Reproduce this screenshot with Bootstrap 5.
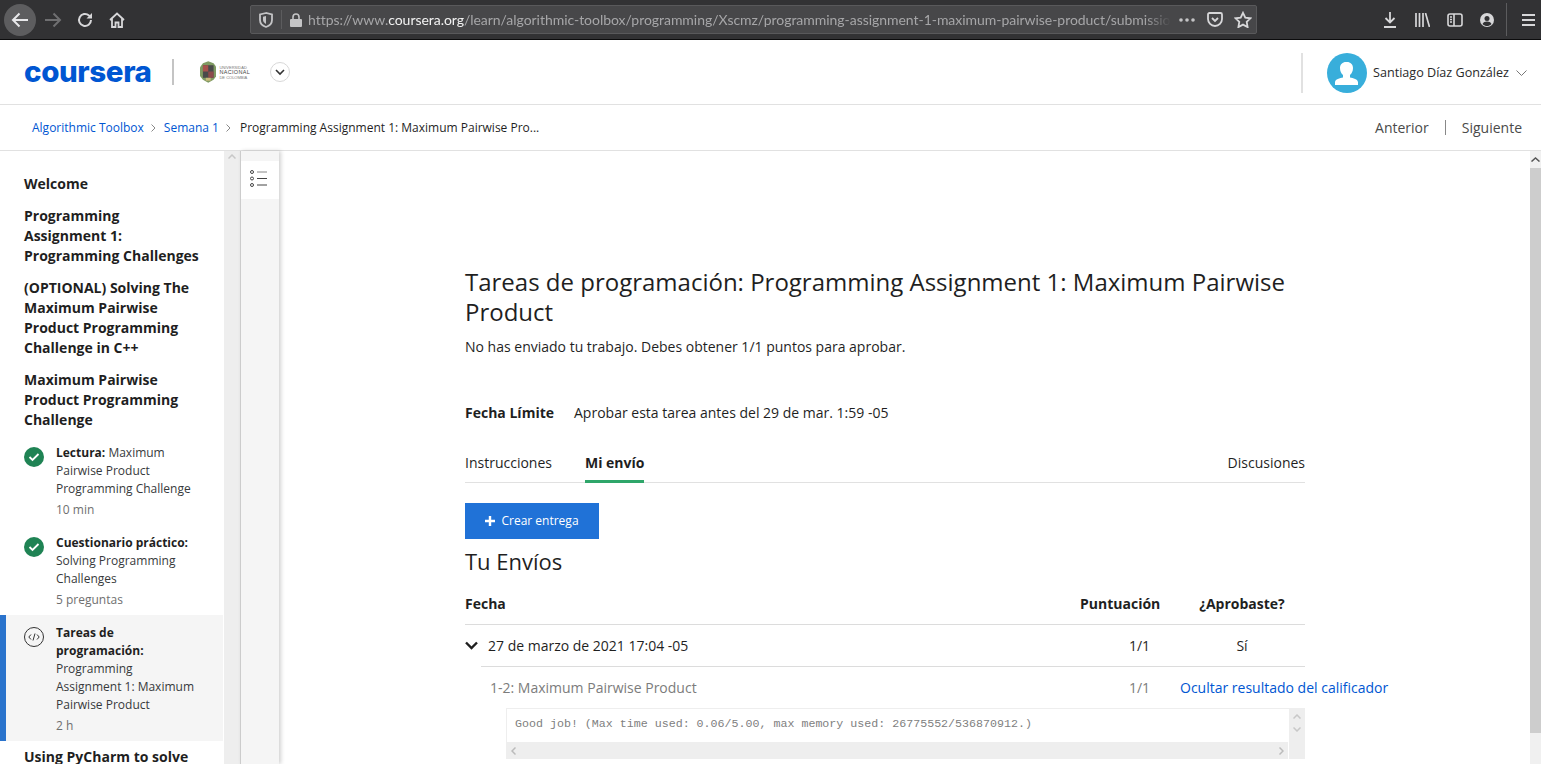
<!DOCTYPE html>
<html lang="es">
<head>
<meta charset="UTF-8">
<title>Programming Assignment 1: Maximum Pairwise Product</title>
<link href="https://cdn.jsdelivr.net/npm/bootstrap@5.3.0/dist/css/bootstrap.min.css" rel="stylesheet">
<style>
html, body { height: 100%; overflow: hidden; }
body { font-family: "Open Sans", sans-serif; font-size: 14px; color: #1f1f1f; background: #fff; }
a { text-decoration: none; }

.ff-bar { height: 40px; background: #323234; border-bottom: 1px solid #0c0c0d; color: #d7d7d9; padding-left: 4px; }
.ff-bar svg { display: block; flex: none; }
.ff-back { width: 32px; height: 32px; border-radius: 50%; background: #5d5d5f; }
.ff-slot { width: 32px; height: 32px; }
.ff-fwd { margin-left: 1px; }
.ff-url { width: 1007px; height: 29px; margin-left: 117px; background: #474749; border: 1px solid #59595b; border-radius: 2px; }
.ff-sep { width: 1px; background: #5c5c5e; align-self: stretch; }
.ff-sep-main { margin: 3px 0 3px 12px; }
.ff-lock { margin-left: 8px; }
.ff-address { width: 863px; flex: none; white-space: nowrap; overflow: hidden; font-family: Lato, sans-serif; font-size: 14px; letter-spacing: -.04px; color: #a6a6a8; margin-left: 6px;
  -webkit-mask-image: linear-gradient(to right, #000 97%, transparent); mask-image: linear-gradient(to right, #000 97%, transparent); }
.ff-address b { font-weight: 400; color: #f2f2f2; }
.ff-pocket { margin-left: 12px; }
.ff-star { margin-left: 11px; }
.ff-down { margin-left: 126px; }
.ff-lib { margin-left: 18px; }
.ff-side { margin-left: 17px; }
.ff-acct { margin-left: 17px; }
.ff-menu { margin-left: 15px; }

.top-head { height: 65px; border-bottom: 1px solid #e1e1e1; }
.brand-word { font-family: Inter, sans-serif; font-weight: 800; font-size: 29.5px; color: #0056d2; margin-left: 24px; letter-spacing: -.4px; line-height: 1; width: 127px; }
.head-rule { width: 2px; height: 26px; background: #c4c4c4; margin-left: 21px; }
.uni-logo { margin-left: 26px; width: 50px; }
.uni-words { font-family: "Liberation Sans", sans-serif; font-size: 4px; line-height: 5px; color: #777; margin-left: 3px; white-space: nowrap; }
.uni-words strong { font-size: 5.5px; font-weight: 400; letter-spacing: .3px; color: #444; }
.circle-btn { width: 20px; height: 20px; border: 1px solid #d8d8d8; border-radius: 50%; margin-left: 20px; }
.user-box { padding: 2px 14px 0 0; }
.user-rule { width: 2px; height: 40px; background: #e1e1e1; margin-right: 24px; }
.user-pic { width: 40px; height: 40px; border-radius: 50%; background: #38aedb; overflow: hidden; }
.user-name { font-size: 12.6px; margin: 0 7px 0 6px; color: #2a2a2a; }

.crumb-bar { height: 46px; border-bottom: 1px solid #e1e1e1; padding: 1px 19px 0 32px; font-size: 12px; }
.crumb-bar a { color: #0056d2; }
.crumb-sep { margin: 0 7.5px; }
.crumb-now { margin-left: 1px; }
.pager { font-size: 14px; color: #4a4a4a; margin-top: -1px; }
.pager i { display: block; width: 1px; height: 15px; background: #888; margin: 0 16px; }

.work-area { height: 613px; }
.side-nav { width: 224px; padding-top: 23px; overflow: hidden; flex: none; }
.side-title { font-size: 14px; font-weight: 700; line-height: 20px; width: 178px; margin: 0 0 12px 24px; color: #1f1f1f; }
.side-item { padding: 9px 0 5px 6px; border-left: 0 solid #2a73cc; }
.side-item.first { margin-top: -7px; }
.side-item.current { background: #f5f5f5; border-left-width: 6px; padding-left: 0; width: 223px; margin-bottom: 6px; }
.side-ico { width: 20px; margin-left: 18px; margin-top: 1px; flex: none; }
.side-text { width: 142px; margin-left: 12px; font-size: 12px; line-height: 18px; color: #373a3c; }
.side-text b { color: #1f1f1f; font-weight: 700; }
.side-text small { display: block; font-size: 12px; line-height: 20px; padding-top: 2px; color: #6f6f6f; }
.side-track { width: 16px; background: #eee; flex: none; padding: 3px 0 0 4px; }
.side-rail { width: 39px; background: #f5f5f5; border-left: 1px solid #ccc; padding-top: 10px; box-shadow: 2px 0 4px rgba(0,0,0,.18); flex: none; }
.rail-btn { height: 38px; background: #fff; }
.rail-btn svg { margin: 0 3px 3px 0; }

.page-body { padding: 116px 0 0 186px; min-width: 0; overflow: hidden; }
.page-inner { width: 840px; }
.page-h1 { font-size: 24px; font-weight: 400; line-height: 30px; margin: 0 0 10px; color: #1f1f1f; }
.page-note { margin: 0 0 46px; line-height: 20px; }
.due-row { line-height: 20px; margin-bottom: 30px; }
.due-row strong { font-weight: 700; margin-right: 20px; }
.tab-row { border-bottom: 1px solid #e1e1e1; height: 30px; }
.tab-row span { display: block; height: 30px; line-height: 20px; margin-right: 33px; }
.tab-row .on { font-weight: 700; border-bottom: 3px solid #2fa66a; }
.tab-row .tab-end { margin: 0 0 0 auto; }
.make-btn { display: block; width: 134px; height: 36px; margin-top: 20px; padding: 0; border: 0; border-radius: 0; background: #2072d7; color: #fff; font-size: 12px; }
.make-btn svg { margin: -2px 6px 0 0; vertical-align: middle; }
.sub-h2 { font-size: 22px; font-weight: 400; line-height: 30px; margin: 7px 0 14px; }
.col-score { width: 119px; flex: none; text-align: center; }
.col-pass { width: 106px; flex: none; text-align: center; padding-right: 20px; }
.sub-head { height: 35px; border-bottom: 1px solid #dcdcdc; font-weight: 700; padding-bottom: 10px; }
.sub-head .col-score { text-align: left; }
.sub-row { height: 42px; }
.sub-row.date-row { border-bottom: 1px solid #dcdcdc; margin-left: 16px; }
.sub-row svg { margin: 0 10px 0 -16px; }
.sub-part { height: 41px; color: #7c7c7c; margin-left: 16px; padding: 0 0 1px 9px; }
.sub-part a { color: #0056d2; white-space: nowrap; margin-left: -19px; display: block; text-align: left; width: 210px; }
.grader-box { margin-left: 41px; height: 51px; border: 1px solid #eee; border-width: 1px 0 0 1px; }
.grader-main { min-width: 0; }
.grader-out { height: 33px; padding: 0 8px; font-family: "Liberation Mono", monospace; font-size: 11.65px; color: #808080; white-space: nowrap; line-height: 30px; overflow: hidden; }
.grader-x { height: 17px; background: #eee; padding: 0 4px; }
.grader-y { width: 17px; flex: none; background: #eee; padding-top: 5px; border-left: 1px solid #fff; }
.page-track { width: 11px; background: #f0f0f0; flex: none; }
.page-up { height: 17px; padding: 6px 0 0 1px; }
.page-thumb { height: 565px; background: #cdcdcd; }
</style>
</head>
<body>

<div class="ff-bar d-flex align-items-center">
  <div class="ff-back d-flex align-items-center justify-content-center">
    <svg width="18" height="16" viewBox="0 0 18 16" fill="none" stroke="#e8e8ea" stroke-width="2"><path d="M17 8H2M8.500 1.500 2 8l6.500 6.500"/></svg>
  </div>
  <div class="ff-slot ff-fwd d-flex align-items-center justify-content-center">
    <svg width="18" height="16" viewBox="0 0 18 16" fill="none" stroke="#6f6f71" stroke-width="2"><path d="M1 8h15M9.500 1.500 16 8l-6.500 6.500"/></svg>
  </div>
  <div class="ff-slot d-flex align-items-center justify-content-center">
    <svg width="16" height="16" viewBox="0 0 16 16" fill="none" stroke="#d7d7d9" stroke-width="2"><path d="M14 8a6 6 0 1 1-2-4.500L14 5"/><path d="M15 1v5.500H9.500" stroke="none" fill="#d7d7d9"/></svg>
  </div>
  <div class="ff-slot d-flex align-items-center justify-content-center">
    <svg width="16" height="16" viewBox="0 0 16 16" fill="none" stroke="#d7d7d9" stroke-width="1.800"><path d="M1 8 8 1.500 15 8M3 6.500V15h3.500v-4.500h3V15H13V6.500"/></svg>
  </div>

  <div class="ff-url d-flex align-items-center">
    <svg class="ms-2" width="14" height="16" viewBox="0 0 14 16"><path d="M7 1 1 2.500V8c0 3.500 3 6 6 7 3-1 6-3.500 6-7V2.500z" fill="none" stroke="#c4c4c6" stroke-width="1.800"/><path d="M7 4 4 4.800V8c0 1.800 1.500 3.200 3 4z" fill="#c4c4c6"/></svg>
    <span class="ff-sep ms-2 my-1"></span>
    <svg class="ff-lock" width="12" height="14" viewBox="0 0 12 14"><path d="M3 6V4a3 3 0 0 1 6 0v2" fill="none" stroke="#c4c4c6" stroke-width="1.600"/><rect y="6" width="12" height="8" rx="1" fill="#c4c4c6"/></svg>
    <div class="ff-address">https://www.<b>coursera.org</b>/learn/algorithmic-toolbox/programming/Xscmz/programming-assignment-1-maximum-pairwise-product/submissions</div>
    <svg class="ms-2" width="16" height="4" viewBox="0 0 16 4" fill="#c4c4c6"><circle cx="2" cy="2" r="1.800"/><circle cx="8" cy="2" r="1.800"/><circle cx="14" cy="2" r="1.800"/></svg>
    <svg class="ff-pocket" width="16" height="15" viewBox="0 0 16 15" fill="none" stroke="#d7d7d9" stroke-width="1.800"><path d="M2.500 1h11A1.500 1.500 0 0 1 15 2.500V7a7 7 0 0 1-14 0V2.500A1.500 1.500 0 0 1 2.500 1z"/><path d="m5 6 3 3 3-3"/></svg>
    <svg class="ff-star" width="18" height="17" viewBox="0 0 18 17" fill="none" stroke="#d7d7d9" stroke-width="1.800"><path d="m9 1.800 2.300 4.800 5.200.7-3.800 3.600.9 5.200L9 13.600l-4.600 2.500.9-5.200L1.500 7.300l5.200-.7z"/></svg>
  </div>

  <svg class="ff-down" width="14" height="16" viewBox="0 0 14 16" fill="none" stroke="#d7d7d9" stroke-width="1.800"><path d="M7 0v10M2.500 6 7 10.500 11.500 6M1 15h12"/></svg>
  <svg class="ff-lib" width="15" height="14" viewBox="0 0 15 14" fill="none" stroke="#d7d7d9" stroke-width="1.700"><path d="M1 0v14M4.500 0v14M8 0v14M10.500 0l4 14"/></svg>
  <svg class="ff-side" width="16" height="14" viewBox="0 0 16 14" fill="none" stroke="#d7d7d9" stroke-width="1.600"><rect x="1" y="1" width="14" height="12" rx="2"/><path d="M7 1v12M3 4h2M3 6.500h2M3 9h2"/></svg>
  <svg class="ff-acct" width="14" height="14" viewBox="0 0 14 14"><circle cx="7" cy="7" r="7" fill="#d7d7d9"/><circle cx="7" cy="5.500" r="2.500" fill="#323234"/><path d="M2.500 11c1-2 2.500-2.600 4.500-2.600s3.500.6 4.500 2.600C10 12.500 8.500 13 7 13s-3-.5-4.500-2z" fill="#323234"/></svg>
  <span class="ff-sep ff-sep-main"></span>
  <svg class="ff-menu" width="13" height="12" viewBox="0 0 13 12" fill="#d7d7d9"><rect width="13" height="2"/><rect y="5" width="13" height="2"/><rect y="10" width="13" height="2"/></svg>
</div>

<header class="top-head d-flex align-items-center">
  <div class="brand-word">coursera</div>
  <span class="head-rule"></span>
  <div class="uni-logo d-flex align-items-center">
    <svg width="17" height="22" viewBox="0 0 17 22"><path d="M8.500 0 14 2l3 4v9l-3 4-5.500 3L3 19l-3-4V6l3-4z" fill="#7f9a62"/><rect x="3" y="4" width="11" height="13" fill="#4a4a4a"/><rect x="3" y="4" width="5.500" height="6.500" fill="#a8524c"/><rect x="8.500" y="10.500" width="5.500" height="6.500" fill="#8c4a4a"/><rect x="6" y="17" width="5" height="3" fill="#c9b97a"/></svg>
    <div class="uni-words"><div>UNIVERSIDAD</div><strong>NACIONAL</strong><div>DE COLOMBIA</div></div>
  </div>
  <div class="circle-btn d-flex align-items-center justify-content-center">
    <svg width="10" height="7" viewBox="0 0 10 7" fill="none" stroke="#333" stroke-width="1.600"><path d="m1 1 4 4 4-4"/></svg>
  </div>
  <div class="user-box ms-auto d-flex align-items-center">
    <span class="user-rule"></span>
    <div class="user-pic">
      <svg class="d-block" width="40" height="40" viewBox="0 0 40 40" fill="#fff"><path d="M20 9c3.500 0 6 2.500 6 6 0 3-1.200 5.500-3 7v2.500c3 .5 8 1.500 8 5V32H8v-2.500c0-3.500 5-4.500 8-5V22c-1.800-1.500-3-4-3-7 0-3.500 2.500-6 6-6z"/></svg>
    </div>
    <span class="user-name">Santiago Díaz González</span>
    <svg width="11" height="6" viewBox="0 0 11 6" fill="none" stroke="#777"><path d="m.5.500 5 5 5-5"/></svg>
  </div>
</header>

<nav class="crumb-bar d-flex align-items-center">
  <a href="#">Algorithmic Toolbox</a>
  <svg class="crumb-sep" width="5" height="8" viewBox="0 0 5 8" fill="none" stroke="#888"><path d="m.5.500 3.500 3.500-3.500 3.500"/></svg>
  <a href="#">Semana 1</a>
  <svg class="crumb-sep" width="5" height="8" viewBox="0 0 5 8" fill="none" stroke="#888"><path d="m.5.500 3.500 3.500-3.500 3.500"/></svg>
  <span class="crumb-now">Programming Assignment 1: Maximum Pairwise Pro...</span>
  <div class="pager ms-auto d-flex align-items-center"><span>Anterior</span><i></i><span>Siguiente</span></div>
</nav>

<div class="work-area d-flex">
  <aside class="side-nav">
    <div class="side-title">Welcome</div>
    <div class="side-title">Programming Assignment 1: Programming Challenges</div>
    <div class="side-title">(OPTIONAL) Solving The Maximum Pairwise Product Programming Challenge in C++</div>
    <div class="side-title">Maximum Pairwise Product Programming Challenge</div>

    <div class="side-item first d-flex">
      <div class="side-ico"><svg width="20" height="20" viewBox="0 0 20 20"><circle cx="10" cy="10" r="10" fill="#1f8354"/><path d="m5.500 10 3 3 6-6" fill="none" stroke="#fff" stroke-width="1.800"/></svg></div>
      <div class="side-text"><b>Lectura:</b> Maximum Pairwise Product Programming Challenge<small>10 min</small></div>
    </div>
    <div class="side-item d-flex">
      <div class="side-ico"><svg width="20" height="20" viewBox="0 0 20 20"><circle cx="10" cy="10" r="10" fill="#1f8354"/><path d="m5.500 10 3 3 6-6" fill="none" stroke="#fff" stroke-width="1.800"/></svg></div>
      <div class="side-text"><b>Cuestionario práctico:</b> Solving Programming Challenges<small>5 preguntas</small></div>
    </div>
    <div class="side-item current d-flex">
      <div class="side-ico"><svg width="20" height="20" viewBox="0 0 20 20" fill="none" stroke="#333"><circle cx="10" cy="10" r="9.500"/><path d="M7 7.500 4.800 10 7 12.500M13 7.500l2.200 2.500-2.200 2.500M11 6.500 9 13.500"/></svg></div>
      <div class="side-text"><b>Tareas de programación:</b> Programming Assignment 1: Maximum Pairwise Product<small>2 h</small></div>
    </div>
    <div class="side-title">Using PyCharm to solve</div>
  </aside>

  <div class="side-track">
    <svg class="d-block" width="8" height="5" viewBox="0 0 8 5" fill="none" stroke="#c8c8c8" stroke-width="1.500"><path d="m.5 4.500 3.500-3.500 3.500 3.500"/></svg>
  </div>
  <div class="side-rail">
    <div class="rail-btn d-flex align-items-center justify-content-center">
      <svg width="18" height="17" viewBox="0 0 18 17" fill="none" stroke="#444"><circle cx="2" cy="2" r="1.500"/><circle cx="2" cy="8.500" r="1.500"/><circle cx="2" cy="15" r="1.500"/><path d="M7 2h10" stroke="#888"/><path d="M7 8.500h10M7 15h10"/></svg>
    </div>
  </div>

  <main class="page-body flex-grow-1">
    <div class="page-inner">
      <h1 class="page-h1">Tareas de programación: Programming Assignment 1: Maximum Pairwise Product</h1>
      <p class="page-note">No has enviado tu trabajo. Debes obtener 1/1 puntos para aprobar.</p>
      <div class="due-row"><strong>Fecha Límite</strong>Aprobar esta tarea antes del 29 de mar. 1:59 -05</div>

      <div class="tab-row d-flex">
        <span>Instrucciones</span>
        <span class="on">Mi envío</span>
        <span class="tab-end">Discusiones</span>
      </div>

      <button class="btn make-btn" type="button"><svg width="10" height="10" viewBox="0 0 10 10" fill="#fff"><path d="M3.800 0h2.400v3.800H10v2.400H6.200V10H3.800V6.200H0V3.800h3.800z"/></svg>Crear entrega</button>
      <h2 class="sub-h2">Tu Envíos</h2>

      <div class="sub-head d-flex align-items-end">
        <div class="flex-grow-1">Fecha</div>
        <div class="col-score">Puntuación</div>
        <div class="col-pass">¿Aprobaste?</div>
      </div>
      <div class="sub-row date-row d-flex align-items-center">
        <svg width="13" height="9" viewBox="0 0 13 9" fill="none" stroke="#1f1f1f" stroke-width="2.400"><path d="m1 1.500 5.500 5.500 5.500-5.500"/></svg>
        <div class="flex-grow-1">27 de marzo de 2021 17:04 -05</div>
        <div class="col-score">1/1</div>
        <div class="col-pass">Sí</div>
      </div>
      <div class="sub-row sub-part d-flex align-items-center">
        <div class="flex-grow-1">1-2: Maximum Pairwise Product</div>
        <div class="col-score">1/1</div>
        <div class="col-pass"><a href="#">Ocultar resultado del calificador</a></div>
      </div>

      <div class="grader-box d-flex">
        <div class="grader-main flex-grow-1">
          <div class="grader-out">Good job! (Max time used: 0.06/5.00, max memory used: 26775552/536870912.)</div>
          <div class="grader-x d-flex align-items-center justify-content-between">
            <svg width="5" height="8" viewBox="0 0 5 8" fill="none" stroke="#bbb" stroke-width="1.500"><path d="M4.500.500 1 4l3.500 3.500"/></svg>
            <svg width="5" height="8" viewBox="0 0 5 8" fill="none" stroke="#bbb" stroke-width="1.500"><path d="M.5.500 4 4 .5 7.500"/></svg>
          </div>
        </div>
        <div class="grader-y d-flex flex-column align-items-center gap-2">
          <svg width="8" height="5" viewBox="0 0 8 5" fill="none" stroke="#c8c8c8" stroke-width="1.500"><path d="m.5 4.500 3.500-3.500 3.500 3.500"/></svg>
          <svg width="8" height="5" viewBox="0 0 8 5" fill="none" stroke="#c8c8c8" stroke-width="1.500"><path d="m.5.500 3.500 3.500 3.500-3.500"/></svg>
        </div>
      </div>
    </div>
  </main>

  <div class="page-track">
    <div class="page-up"><svg class="d-block" width="9" height="5" viewBox="0 0 9 5" fill="none" stroke="#555" stroke-width="1.500"><path d="m.5 4.500 4-3.500 4 3.500"/></svg></div>
    <div class="page-thumb"></div>
  </div>
</div>

<script src="https://cdn.jsdelivr.net/npm/bootstrap@5.3.0/dist/js/bootstrap.bundle.min.js"></script>
</body>
</html>
